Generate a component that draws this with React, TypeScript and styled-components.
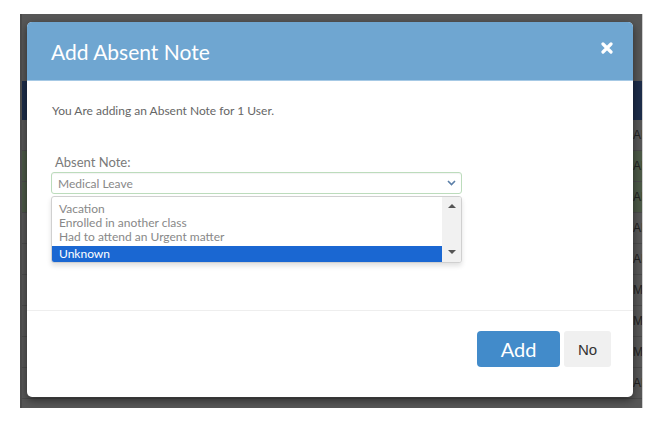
import React from "react";
import styled, { createGlobalStyle } from "styled-components";

const Global = createGlobalStyle`
  html, body { margin: 0; padding: 0; background: #ffffff; }
  body { font-family: Lato, "Open Sans", sans-serif; }
  * { box-sizing: border-box; }
`;

const Page = styled.div`
  width: 660px;
  height: 421px;
  padding: 14px 0 0 20px;
`;

const Screen = styled.div`
  position: relative;
  width: 623px;
  height: 394px;
  background: #575757;
  border-right: 1px solid #cfcfcf;
  border-left: 2px solid #4a4a4a;
  overflow: hidden;
  display: flex;
  flex-direction: column;
`;

const TopGap = styled.div`
  height: 67px;
  flex: none;
`;

const NavyBar = styled.div`
  height: 39px;
  flex: none;
  background: #1d2d4a;
`;

const Row = styled.div<{ $green?: boolean }>`
  height: 31px;
  flex: none;
  border-bottom: 1px solid #4b4b4b;
  background: ${(p) => (p.$green ? "#4c5947" : "#575757")};
  display: flex;
  align-items: center;
`;

const Time = styled.span<{ $pm?: boolean }>`
  padding-left: ${(p) => (p.$pm ? 603 : 611)}px;
  font-family: "Liberation Sans", Arial, sans-serif;
  font-size: 12px;
  color: #222;
  white-space: nowrap;
`;

const Modal = styled.div`
  position: absolute;
  left: 5px;
  top: 8px;
  width: 606px;
  height: 375px;
  background: #fff;
  border-radius: 5px;
  box-shadow: 0 3px 9px rgba(0, 0, 0, 0.5);
  overflow: hidden;
  display: flex;
  flex-direction: column;
`;

const Header = styled.div`
  height: 59px;
  flex: none;
  background: #6fa6d1;
  border-bottom: 1px solid #a6c9e5;
  display: flex;
  justify-content: space-between;
  align-items: flex-start;
  padding: 0 20px 0 24px;
`;

const Title = styled.h2`
  margin: 17px 0 0;
  font-family: Lato, sans-serif;
  font-weight: 400;
  font-size: 21px;
  line-height: 26px;
  color: #fff;
`;

const CloseIcon = styled.svg`
  margin-top: 20px;
  width: 12px;
  height: 12px;
`;

const Body = styled.div`
  flex: 1;
  padding: 22px 0 0 25px;
  display: flex;
  flex-direction: column;
  align-items: flex-start;
`;

const Intro = styled.p`
  margin: 0;
  font-size: 12px;
  line-height: 16px;
  color: #666;
`;

const Label = styled.label`
  margin-top: 35px;
  padding-left: 3px;
  font-size: 13px;
  line-height: 16px;
  color: #7a7a7a;
`;

const Select = styled.div`
  margin: 2px 0 0 -1px;
  width: 411px;
  height: 22px;
  border: 1px solid #bcdcbc;
  border-radius: 3px;
  box-shadow: inset 0 1px 1px rgba(0, 0, 0, 0.05);
  display: flex;
  align-items: center;
  justify-content: space-between;
  padding: 0 5px 0 6px;
  font-size: 12px;
  color: #888;
`;

const Chevron = styled.svg`
  width: 9px;
  height: 6px;
`;

const ListBox = styled.div`
  margin: 2px 0 0 -1px;
  width: 411px;
  height: 67px;
  border: 1px solid #d0d0d0;
  border-radius: 3px;
  box-shadow: 0 3px 5px rgba(0, 0, 0, 0.12);
  background: #fff;
  display: flex;
  overflow: hidden;
`;

const Options = styled.div`
  flex: 1;
  padding-top: 5px;
  display: flex;
  flex-direction: column;
`;

const Option = styled.div<{ $selected?: boolean }>`
  height: ${(p) => (p.$selected ? 16 : 14)}px;
  line-height: ${(p) => (p.$selected ? 16 : 14)}px;
  margin-top: ${(p) => (p.$selected ? 2 : 0)}px;
  padding-left: 7px;
  font-size: 12px;
  color: ${(p) => (p.$selected ? "#fff" : "#888")};
  background: ${(p) => (p.$selected ? "#1a67d2" : "transparent")};
`;

const Scrollbar = styled.div`
  width: 19px;
  flex: none;
  background: #f1f1f1;
  display: flex;
  flex-direction: column;
  align-items: center;
  justify-content: space-between;
  padding: 7px 0 8px;
`;

const Arrow = styled.span<{ $down?: boolean }>`
  width: 0;
  height: 0;
  border-left: 4px solid transparent;
  border-right: 4px solid transparent;
  ${(p) =>
    p.$down
      ? "border-top: 4px solid #555;"
      : "border-bottom: 4px solid #555;"}
`;

const Footer = styled.div`
  height: 87px;
  flex: none;
  border-top: 1px solid #eeeeee;
  display: flex;
  justify-content: flex-end;
  align-items: flex-start;
  gap: 4px;
  padding: 20px 22px 0 0;
`;

const AddButton = styled.button`
  width: 83px;
  height: 36px;
  border: none;
  border-radius: 4px;
  background: #428bca;
  color: #fff;
  font-family: Lato, sans-serif;
  font-size: 20px;
  padding: 0;
`;

const NoButton = styled.button`
  width: 47px;
  height: 36px;
  border: none;
  border-radius: 3px;
  background: #f0f0f0;
  color: #333;
  font-family: "Liberation Sans", Arial, sans-serif;
  font-size: 15px;
  padding: 0;
`;

const rows: { green?: boolean; pm?: boolean }[] = [
  {},
  { green: true },
  { green: true },
  {},
  {},
  { pm: true },
  { pm: true },
  { pm: true },
  {},
];

export default function App() {
  return (
    <Page>
      <Global />
      <Screen>
        <TopGap />
        <NavyBar />
        {rows.map((r, i) => (
          <Row key={i} $green={r.green}>
            <Time $pm={r.pm}>{r.pm ? "PM" : "AM"}</Time>
          </Row>
        ))}
        <Modal>
          <Header>
            <Title>Add Absent Note</Title>
            <CloseIcon viewBox="0 0 12 12">
              <path
                d="M2 2 L10 10 M10 2 L2 10"
                stroke="#fff"
                strokeWidth="3.2"
                strokeLinecap="round"
              />
            </CloseIcon>
          </Header>
          <Body>
            <Intro>You Are adding an Absent Note for 1 User.</Intro>
            <Label>Absent Note:</Label>
            <Select>
              <span>Medical Leave</span>
              <Chevron viewBox="0 0 9 6">
                <path d="M1 1 L4.5 4.5 L8 1" fill="none" stroke="#5b7fa8" strokeWidth="1.6" />
              </Chevron>
            </Select>
            <ListBox>
              <Options>
                <Option>Vacation</Option>
                <Option>Enrolled in another class</Option>
                <Option>Had to attend an Urgent matter</Option>
                <Option $selected>Unknown</Option>
              </Options>
              <Scrollbar>
                <Arrow />
                <Arrow $down />
              </Scrollbar>
            </ListBox>
          </Body>
          <Footer>
            <AddButton>Add</AddButton>
            <NoButton>No</NoButton>
          </Footer>
        </Modal>
      </Screen>
    </Page>
  );
}
